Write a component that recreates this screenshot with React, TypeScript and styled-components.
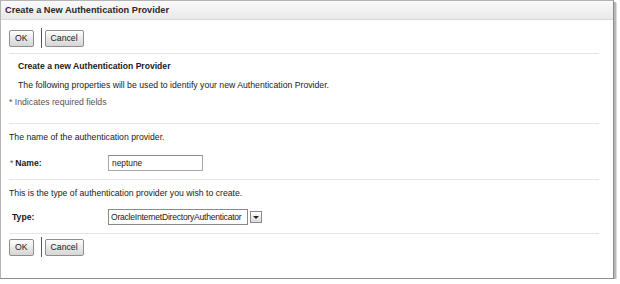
import React from "react";
import styled, { createGlobalStyle } from "styled-components";

const Global = createGlobalStyle`
  html, body { margin: 0; padding: 0; background: #ffffff; }
  body { font-family: "Liberation Sans", Arial, sans-serif; font-size: 8.7px; color: #1a1a1a; }
`;

const Panel = styled.div`
  width: 614px;
  height: 279px;
  box-sizing: border-box;
  border: 1px solid #b4b4b4;
  border-right-color: #8c8c8c;
  border-bottom-color: #8c8c8c;
  box-shadow: 2px 2px 0 #b8b8b8, 3px 3px 0 #dcdcdc;
  display: flex;
  flex-direction: column;
  background: #fff;
`;

const Header = styled.div`
  height: 19px;
  box-sizing: border-box;
  background: linear-gradient(#fafafa, #e9e9e9);
  border-bottom: 1px solid #d8d8d8;
  display: flex;
  align-items: center;
  padding-left: 4px;
  font-weight: bold;
  font-size: 9.2px;
  color: #2a2a2a;
`;

const Body = styled.div`
  display: flex;
  flex-direction: column;
  padding: 0 14px 0 8px;
`;

const Toolbar = styled.div<{ $top: number }>`
  display: flex;
  align-items: center;
  margin-top: ${(p) => p.$top}px;
  height: 18px;
`;

const Button = styled.button`
  height: 17px;
  box-sizing: border-box;
  padding: 0 5px;
  border: 1px solid #8e8e8e;
  border-radius: 2px;
  background: linear-gradient(#ffffff, #e4e4e4 60%, #d6d6d6);
  font-family: "Liberation Sans", Arial, sans-serif;
  font-size: 8.7px;
  color: #1a1a1a;
  margin: 0;
`;

const Sep = styled.div`
  width: 1px;
  height: 20px;
  background: #555;
  margin: 0 3px 0 7px;
`;

const Divider = styled.div<{ $top: number }>`
  height: 1px;
  background: #e4e4e4;
  margin-top: ${(p) => p.$top}px;
`;

const Text = styled.div<{ $top: number; $indent?: number; $bold?: boolean; $muted?: boolean }>`
  margin-top: ${(p) => p.$top}px;
  padding-left: ${(p) => p.$indent ?? 0}px;
  line-height: 12px;
  font-weight: ${(p) => (p.$bold ? "bold" : "normal")};
  color: ${(p) => (p.$muted ? "#555" : "#1a1a1a")};
  font-size: ${(p) => (p.$bold ? "8.6px" : "inherit")};
`;

const FieldRow = styled.div<{ $top: number }>`
  display: flex;
  align-items: center;
  margin-top: ${(p) => p.$top}px;
`;

const Label = styled.div<{ $indent?: number }>`
  width: 99px;
  padding-left: ${(p) => p.$indent ?? 1}px;
  box-sizing: border-box;
  font-weight: bold;
  font-size: 8.6px;
`;

const Star = styled.span`
  font-weight: normal;
  color: #555;
  margin-right: 2px;
`;

const Input = styled.div`
  width: 95px;
  height: 16px;
  box-sizing: border-box;
  border: 1px solid #a8a8a8;
  border-top-color: #8a8a8a;
  padding-left: 3px;
  display: flex;
  align-items: center;
  font-size: 8.4px;
`;

const Select = styled.div`
  display: flex;
  align-items: center;
  gap: 2px;
`;

const SelectBox = styled.div`
  width: 140px;
  height: 16px;
  box-sizing: border-box;
  border: 1px solid #8a8a8a;
  padding: 0 2px;
  display: flex;
  align-items: center;
  font-size: 8.6px;
  letter-spacing: -0.25px;
  white-space: nowrap;
  overflow: hidden;
`;

const SelectButton = styled.div`
  width: 12px;
  height: 12px;
  box-sizing: border-box;
  border: 1px solid #8a8a8a;
  background: linear-gradient(#fff, #dcdcdc);
  display: flex;
  align-items: center;
  justify-content: center;
`;

export default function App() {
  return (
    <>
      <Global />
      <Panel>
        <Header>Create a New Authentication Provider</Header>
        <Body>
          <Toolbar $top={9}>
            <Button>OK</Button>
            <Sep />
            <Button>Cancel</Button>
          </Toolbar>
          <Divider $top={6} />
          <Text $top={6} $indent={9} $bold>
            Create a new Authentication Provider
          </Text>
          <Text $top={7} $indent={9}>
            The following properties will be used to identify your new Authentication Provider.
          </Text>
          <Text $top={5} $muted>
            * Indicates required fields
          </Text>
          <Divider $top={15} />
          <Text $top={7}>The name of the authentication provider.</Text>
          <FieldRow $top={12}>
            <Label>
              <Star>*</Star>Name:
            </Label>
            <Input>neptune</Input>
          </FieldRow>
          <Divider $top={8} />
          <Text $top={7}>This is the type of authentication provider you wish to create.</Text>
          <FieldRow $top={10}>
            <Label $indent={3}>Type:</Label>
            <Select>
              <SelectBox>OracleInternetDirectoryAuthenticator</SelectBox>
              <SelectButton>
                <svg width="6" height="3" viewBox="0 0 6 3">
                  <path d="M0 0 L6 0 L3 3 Z" fill="#222" />
                </svg>
              </SelectButton>
            </Select>
          </FieldRow>
          <Divider $top={8} />
          <Toolbar $top={4}>
            <Button>OK</Button>
            <Sep />
            <Button>Cancel</Button>
          </Toolbar>
        </Body>
      </Panel>
    </>
  );
}
